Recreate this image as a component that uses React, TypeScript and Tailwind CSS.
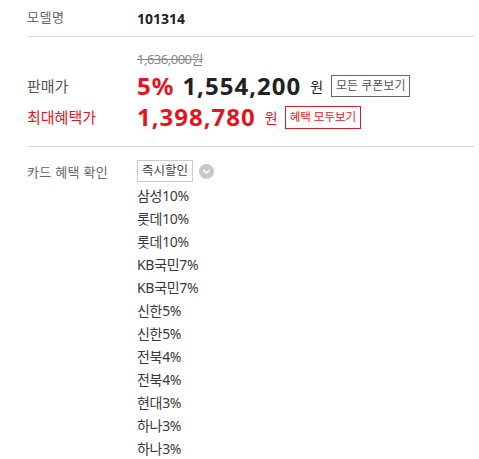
import React from "react";

const cards = [
  "삼성10%",
  "롯데10%",
  "롯데10%",
  "KB국민7%",
  "KB국민7%",
  "신한5%",
  "신한5%",
  "전북4%",
  "전북4%",
  "현대3%",
  "하나3%",
  "하나3%",
];

export default function App() {
  return (
    <div
      className="w-[479px] h-[459px] bg-white overflow-hidden pl-[27px] pr-[5px]"
      style={{ fontFamily: '"Noto Sans", "Noto Sans CJK KR", sans-serif' }}
    >
      {/* Model row */}
      <div className="flex items-center h-[37px] border-b border-[#dcdcdc]">
        <div className="w-[110px] text-[13px] text-[#666] tracking-[0.5px]">모델명</div>
        <div className="text-[14px] font-bold text-[#222]">101314</div>
      </div>

      {/* Price section */}
      <div className="flex flex-col pt-[13px] pb-[14px] border-b border-[#dcdcdc]">
        <div className="flex">
          <div className="w-[110px]" />
          <div className="text-[13px] text-[#888] line-through leading-[18px] tracking-[-0.5px]">1,636,000원</div>
        </div>
        <div className="flex items-center h-[30px] mt-[3px]">
          <div className="w-[110px] text-[15px] text-[#555]">판매가</div>
          <div className="flex items-center">
            <span className="text-[24px] font-bold text-[#e5141c] leading-none tracking-[1px]">5%</span>
            <span className="ml-[8px] text-[24px] font-bold text-[#222] leading-none tracking-[1px]">1,554,200</span>
            <span className="ml-[9px] text-[14px] text-[#222]">원</span>
            <span className="ml-[8px] border border-[#666] text-[12px] text-[#555] px-[4px] h-[22px] flex items-center">
              모든 쿠폰보기
            </span>
          </div>
        </div>
        <div className="flex items-center h-[30px] mt-[1px]">
          <div className="w-[110px] text-[15px] text-[#e5141c]">최대혜택가</div>
          <div className="flex items-center">
            <span className="text-[24px] font-bold text-[#e5141c] leading-none tracking-[1px]">1,398,780</span>
            <span className="ml-[9px] text-[14px] text-[#e5141c]">원</span>
            <span className="ml-[7px] border border-[#d0202a] text-[11.5px] text-[#e5141c] px-[4px] h-[23px] flex items-center">
              혜택 모두보기
            </span>
          </div>
        </div>
      </div>

      {/* Card benefits */}
      <div className="flex pt-[13px]">
        <div className="w-[110px] text-[13px] text-[#666] leading-[22px] pt-[1px] tracking-[0.3px]">카드 혜택 확인</div>
        <div className="flex flex-col">
          <div className="flex items-center gap-[6px]">
            <span className="border border-[#ccc] h-[22px] px-[4px] flex items-center text-[12.5px] text-[#444]">
              즉시할인
            </span>
            <svg width="15" height="15" viewBox="0 0 16 16">
              <circle cx="8" cy="8" r="8" fill="#c8c8c8" />
              <path d="M4.8 6.6 L8 9.6 L11.2 6.6" stroke="#fff" strokeWidth="1.5" fill="none" strokeLinecap="round" strokeLinejoin="round" />
            </svg>
          </div>
          <div className="flex flex-col mt-[2px]">
            {cards.map((c, i) => (
              <div key={i} className="h-[23px] flex items-center text-[14px] text-[#3a3a3a] tracking-[-0.3px]">
                {c}
              </div>
            ))}
          </div>
        </div>
      </div>
    </div>
  );
}
